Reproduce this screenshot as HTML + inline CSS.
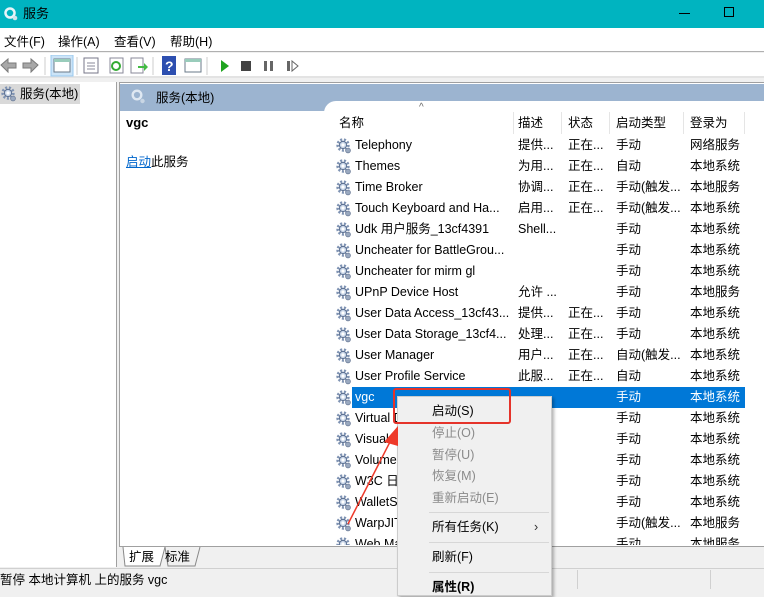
<!DOCTYPE html>
<html><head><meta charset="utf-8">
<style>
*{margin:0;padding:0;box-sizing:border-box}
body{width:764px;height:589px;overflow:hidden;position:relative;background:#f0f0f0;font-family:"Liberation Sans","Noto Sans CJK SC",sans-serif;font-size:12.5px;color:#000}
.a{position:absolute;white-space:nowrap}
.row{position:absolute;left:336px;height:21px;width:410px;line-height:21px}
.row span{position:absolute;top:0}
.g{position:absolute;left:0;top:3px;width:16px;height:16px}
.n{left:19px}.d{left:182px}.s{left:232px}.t{left:280px}.l{left:354px}
.mi{position:absolute;left:34px;line-height:20px;font-size:12.5px}
.dis{color:#8a8a8a}
</style></head><body>
<svg width="0" height="0" style="position:absolute"><defs>
<g id="gear"><circle cx="7" cy="7" r="5.2" fill="none" stroke="#7f93b3" stroke-width="3" stroke-dasharray="2 1.6"/><circle cx="7" cy="7" r="3.6" fill="#c9d6e8" stroke="#5b6f90" stroke-width="1"/><circle cx="7" cy="7" r="1.6" fill="#fff"/><circle cx="12" cy="12.5" r="2.4" fill="#9aa9c0" stroke="#6c7c98" stroke-width=".8"/></g>
</defs></svg>
<!-- title -->
<div class="a" style="left:0;top:0;width:764px;height:28px;background:#00b4c0"></div>
<svg class="a" style="left:3px;top:6px" width="16" height="16"><circle cx="7" cy="7" r="4.5" fill="none" stroke="#e8f4f8" stroke-width="2.5"/><circle cx="12" cy="12" r="2.3" fill="#cfe3ea"/></svg>
<div class="a" style="left:23px;top:3px;font-size:13px;color:#000">服务</div>
<div class="a" style="left:679px;top:13px;width:11px;height:1px;background:#000"></div>
<div class="a" style="left:724px;top:7px;width:10px;height:10px;border:1px solid #000"></div>
<!-- menu -->
<div class="a" style="left:0;top:28px;width:764px;height:24px;background:#fff;border-bottom:1px solid #b0b0b0"></div>
<div class="a" style="left:4px;top:31px">文件(F)</div>
<div class="a" style="left:58px;top:31px">操作(A)</div>
<div class="a" style="left:114px;top:31px">查看(V)</div>
<div class="a" style="left:170px;top:31px">帮助(H)</div>
<!-- toolbar -->
<div class="a" style="left:0;top:53px;width:764px;height:25px;background:#fff;border-bottom:2px solid #e3e3e3"></div>
<svg class="a" style="left:0;top:55px" width="310" height="22">
<path d="M1 10 L8 4 L8 8 L16 8 L16 13 L8 13 L8 17 Z" fill="#a8a8a8" stroke="#7a7a7a"/>
<path d="M38 10 L31 4 L31 8 L23 8 L23 13 L31 13 L31 17 Z" fill="#a8a8a8" stroke="#7a7a7a"/>
<line x1="45" y1="2" x2="45" y2="20" stroke="#ccc"/>
<rect x="51" y="0" width="22" height="21" fill="#cce4f7" stroke="#99c9ef"/>
<rect x="54" y="4" width="16" height="13" fill="#fff" stroke="#6a7a8a"/><rect x="54" y="4" width="16" height="3" fill="#9cb"/>
<line x1="77" y1="2" x2="77" y2="20" stroke="#ccc"/>
<rect x="84" y="3" width="14" height="15" fill="#fff" stroke="#778"/><line x1="87" y1="8" x2="95" y2="8" stroke="#889"/><line x1="87" y1="11" x2="95" y2="11" stroke="#889"/><line x1="87" y1="14" x2="95" y2="14" stroke="#889"/>
<rect x="110" y="3" width="13" height="15" fill="#fff" stroke="#889"/><circle cx="116" cy="11" r="4" fill="none" stroke="#3a3" stroke-width="2"/>
<rect x="131" y="3" width="12" height="15" fill="#fff" stroke="#889"/><path d="M138 11 h6 v-3 l4 4 -4 4 v-3 h-6z" fill="#4b4"/>
<line x1="153" y1="2" x2="153" y2="20" stroke="#ccc"/>
<rect x="162" y="1" width="14" height="19" fill="#2d4fb0"/><text x="165" y="16" fill="#fff" font-size="14" font-weight="bold" font-family="Liberation Sans">?</text>
<rect x="185" y="4" width="16" height="13" fill="#fff" stroke="#6a7a8a"/><rect x="185" y="4" width="16" height="3" fill="#9cb"/>
<line x1="207" y1="2" x2="207" y2="20" stroke="#ccc"/>
<path d="M221 5 L229 11 L221 17Z" fill="#1fa31f"/>
<rect x="241" y="6" width="10" height="10" fill="#444"/>
<rect x="264" y="6" width="3" height="10" fill="#666"/><rect x="270" y="6" width="3" height="10" fill="#666"/>
<rect x="287" y="6" width="3" height="10" fill="#666"/><path d="M292 6 L298 11 L292 16Z" fill="none" stroke="#666"/>
</svg>
<!-- left pane -->
<div class="a" style="left:0;top:82px;width:117px;height:485px;background:#fff;border-right:1px solid #a0a0a0"></div>
<div class="a" style="left:0;top:84px;width:80px;height:20px;background:#d9d9d9"></div>
<svg class="a" style="left:1px;top:86px" width="16" height="16"><use href="#gear"/></svg>
<div class="a" style="left:20px;top:83px">服务(本地)</div>
<!-- right pane -->
<div class="a" style="left:119px;top:82px;width:645px;height:465px;background:#fff;border-left:1px solid #a0a0a0;border-top:1px solid #a0a0a0"></div>
<div class="a" style="left:120px;top:84px;width:644px;height:27px;background:#9cb4d0"></div>
<svg class="a" style="left:131px;top:89px" width="16" height="16"><circle cx="6" cy="6" r="4.3" fill="none" stroke="#dfe8f2" stroke-width="2.4"/><circle cx="11.5" cy="12" r="2.2" fill="#c9d6e4"/></svg>
<div class="a" style="left:156px;top:87px">服务(本地)</div>
<div class="a" style="left:324px;top:101px;width:440px;height:20px;background:#fff;border-top-left-radius:12px"></div>
<div class="a" style="left:126px;top:115px;font-weight:bold;font-size:13px">vgc</div>
<div class="a" style="left:126px;top:151px"><span style="color:#0066cc;text-decoration:underline">启动</span>此服务</div>
<!-- header -->
<div class="a" style="left:339px;top:112px">名称</div>
<div class="a" style="left:419px;top:102px;font-size:10px;color:#666">^</div>
<div class="a" style="left:513px;top:112px;width:1px;height:22px;background:#e5e5e5"></div>
<div class="a" style="left:561px;top:112px;width:1px;height:22px;background:#e5e5e5"></div>
<div class="a" style="left:609px;top:112px;width:1px;height:22px;background:#e5e5e5"></div>
<div class="a" style="left:683px;top:112px;width:1px;height:22px;background:#e5e5e5"></div>
<div class="a" style="left:744px;top:112px;width:1px;height:22px;background:#e5e5e5"></div>
<div class="a" style="left:518px;top:112px">描述</div>
<div class="a" style="left:568px;top:112px">状态</div>
<div class="a" style="left:616px;top:112px">启动类型</div>
<div class="a" style="left:690px;top:112px">登录为</div>
<!-- rows -->
<div class="a" style="left:330px;top:135px;width:430px;height:410px;overflow:hidden">
<div style="position:absolute;left:-330px;top:-135px;width:764px;height:600px">
<div class="row" style="top:135px"><svg class="g"><use href="#gear"/></svg><span class="n">Telephony</span><span class="d">提供...</span><span class="s">正在...</span><span class="t">手动</span><span class="l">网络服务</span></div>
<div class="row" style="top:156px"><svg class="g"><use href="#gear"/></svg><span class="n">Themes</span><span class="d">为用...</span><span class="s">正在...</span><span class="t">自动</span><span class="l">本地系统</span></div>
<div class="row" style="top:177px"><svg class="g"><use href="#gear"/></svg><span class="n">Time Broker</span><span class="d">协调...</span><span class="s">正在...</span><span class="t">手动(触发...</span><span class="l">本地服务</span></div>
<div class="row" style="top:198px"><svg class="g"><use href="#gear"/></svg><span class="n">Touch Keyboard and Ha...</span><span class="d">启用...</span><span class="s">正在...</span><span class="t">手动(触发...</span><span class="l">本地系统</span></div>
<div class="row" style="top:219px"><svg class="g"><use href="#gear"/></svg><span class="n">Udk 用户服务_13cf4391</span><span class="d">Shell...</span><span class="t">手动</span><span class="l">本地系统</span></div>
<div class="row" style="top:240px"><svg class="g"><use href="#gear"/></svg><span class="n">Uncheater for BattleGrou...</span><span class="t">手动</span><span class="l">本地系统</span></div>
<div class="row" style="top:261px"><svg class="g"><use href="#gear"/></svg><span class="n">Uncheater for mirm gl</span><span class="t">手动</span><span class="l">本地系统</span></div>
<div class="row" style="top:282px"><svg class="g"><use href="#gear"/></svg><span class="n">UPnP Device Host</span><span class="d">允许 ...</span><span class="t">手动</span><span class="l">本地服务</span></div>
<div class="row" style="top:303px"><svg class="g"><use href="#gear"/></svg><span class="n">User Data Access_13cf43...</span><span class="d">提供...</span><span class="s">正在...</span><span class="t">手动</span><span class="l">本地系统</span></div>
<div class="row" style="top:324px"><svg class="g"><use href="#gear"/></svg><span class="n">User Data Storage_13cf4...</span><span class="d">处理...</span><span class="s">正在...</span><span class="t">手动</span><span class="l">本地系统</span></div>
<div class="row" style="top:345px"><svg class="g"><use href="#gear"/></svg><span class="n">User Manager</span><span class="d">用户...</span><span class="s">正在...</span><span class="t">自动(触发...</span><span class="l">本地系统</span></div>
<div class="row" style="top:366px"><svg class="g"><use href="#gear"/></svg><span class="n">User Profile Service</span><span class="d">此服...</span><span class="s">正在...</span><span class="t">自动</span><span class="l">本地系统</span></div>
<div class="a" style="left:352px;top:387px;width:393px;height:21px;background:#0078d7"></div>
<div class="row" style="top:387px;color:#fff"><svg class="g"><use href="#gear"/></svg><span class="n">vgc</span><span class="t">手动</span><span class="l">本地系统</span></div>
<div class="row" style="top:408px"><svg class="g"><use href="#gear"/></svg><span class="n">Virtual Disk</span><span class="t">手动</span><span class="l">本地系统</span></div>
<div class="row" style="top:429px"><svg class="g"><use href="#gear"/></svg><span class="n">Visual Studio</span><span class="t">手动</span><span class="l">本地系统</span></div>
<div class="row" style="top:450px"><svg class="g"><use href="#gear"/></svg><span class="n">Volume Shadow</span><span class="t">手动</span><span class="l">本地系统</span></div>
<div class="row" style="top:471px"><svg class="g"><use href="#gear"/></svg><span class="n">W3C 日志</span><span class="t">手动</span><span class="l">本地系统</span></div>
<div class="row" style="top:492px"><svg class="g"><use href="#gear"/></svg><span class="n">WalletService</span><span class="t">手动</span><span class="l">本地系统</span></div>
<div class="row" style="top:513px"><svg class="g"><use href="#gear"/></svg><span class="n">WarpJITSvc</span><span class="t">手动(触发...</span><span class="l">本地服务</span></div>
<div class="row" style="top:534px"><svg class="g"><use href="#gear"/></svg><span class="n">Web Management</span><span class="t">手动</span><span class="l">本地服务</span></div>
</div></div>
<!-- tabs -->
<div class="a" style="left:119px;top:546px;width:645px;height:1px;background:#a0a0a0"></div>
<svg class="a" style="left:120px;top:546px" width="90" height="22"><path d="M3 1 L5 20 L40 20 L45 1" fill="#fff" stroke="#888"/><path d="M45 1 L48 20 L75 20 L80 1" fill="#f0f0f0" stroke="#888"/></svg>
<div class="a" style="left:129px;top:546px">扩展</div>
<div class="a" style="left:165px;top:546px">标准</div>
<!-- status -->
<div class="a" style="left:0;top:568px;width:764px;height:1px;background:#d0d0d0"></div>
<div class="a" style="left:0;top:569px">暂停 本地计算机 上的服务 vgc</div>
<div class="a" style="left:577px;top:570px;width:1px;height:19px;background:#d0d0d0"></div>
<div class="a" style="left:710px;top:570px;width:1px;height:19px;background:#d0d0d0"></div>
<!-- context menu -->
<div class="a" style="left:397px;top:396px;width:155px;height:200px;background:#f0f0f0;border:1px solid #ccc;box-shadow:2px 2px 3px rgba(0,0,0,.3)">
<div class="mi" style="top:4px">启动(S)</div>
<div class="mi dis" style="top:26px">停止(O)</div>
<div class="mi dis" style="top:48px">暂停(U)</div>
<div class="mi dis" style="top:69px">恢复(M)</div>
<div class="mi dis" style="top:91px">重新启动(E)</div>
<div class="a" style="left:31px;top:115px;width:120px;height:1px;background:#d7d7d7"></div>
<div class="mi" style="top:120px">所有任务(K)</div>
<div class="a" style="left:136px;top:120px;line-height:20px;color:#333">›</div>
<div class="a" style="left:31px;top:145px;width:120px;height:1px;background:#d7d7d7"></div>
<div class="mi" style="top:150px">刷新(F)</div>
<div class="a" style="left:31px;top:175px;width:120px;height:1px;background:#d7d7d7"></div>
<div class="mi" style="top:180px;font-weight:bold">属性(R)</div>
</div>
<div class="a" style="left:393px;top:388px;width:118px;height:36px;border:2px solid #e5332a;border-radius:3px"></div>
<svg class="a" style="left:340px;top:420px" width="70" height="110"><line x1="8" y1="104" x2="52" y2="18" stroke="#ee3a2a" stroke-width="1.5"/><path d="M58 6 L44 22 L58 26Z" fill="#ee3a2a"/></svg>
</body></html>
